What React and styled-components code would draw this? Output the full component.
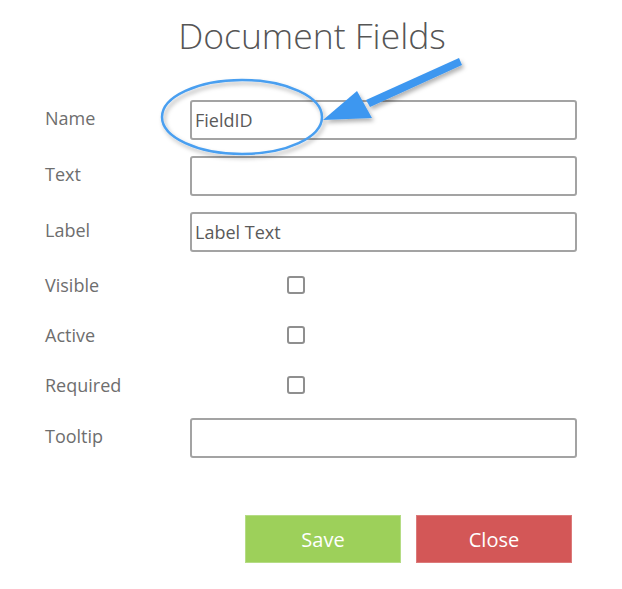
import styled, { createGlobalStyle } from 'styled-components';

const GlobalStyle = createGlobalStyle`
  body {
    margin: 0;
    background: #fff;
    font-family: "Open Sans", "Noto Sans", sans-serif;
  }
`;

const Page = styled.div`
  position: relative;
  width: 622px;
  height: 589px;
  overflow: hidden;
  background: #fff;
`;

const Title = styled.h1`
  margin: 0;
  padding-top: 11px;
  height: 100px;
  box-sizing: border-box;
  text-align: center;
  font-size: 35.5px;
  font-weight: 300;
  color: #555;
  padding-left: 2px;
`;

const Form = styled.div`
  display: flex;
  flex-direction: column;
  gap: 16px;
  padding-left: 45px;
`;

const Row = styled.div`
  display: grid;
  grid-template-columns: 145px 387px;
  align-items: center;
  height: ${(p) => (p.$check ? '34px' : '40px')};
`;

const Label = styled.span`
  font-size: 18px;
  color: #6e6e6e;
  padding-bottom: ${(p) => (p.$top ? '5px' : '0')};
`;

const TextInput = styled.div`
  box-sizing: border-box;
  height: 40px;
  border: 2px solid #a3a3a3;
  border-radius: 3px;
  padding-left: 3px;
  display: flex;
  align-items: center;
  font-size: 18px;
  color: #5a5a5a;
`;

const CheckBox = styled.span`
  box-sizing: border-box;
  width: 18px;
  height: 18px;
  margin-left: 97px;
  border: 2px solid #8f8f8f;
  border-radius: 3px;
`;

const Buttons = styled.div`
  display: flex;
  gap: 15px;
  padding-left: 245px;
  margin-top: 57px;
`;

const Button = styled.div`
  width: 156px;
  height: 48px;
  display: flex;
  align-items: center;
  justify-content: center;
  font-size: 20px;
  color: #fff;
  background: ${(p) => p.$color};
  border: 1px solid ${(p) => p.$edge};
  box-sizing: border-box;
`;

const Annotation = styled.svg`
  position: absolute;
  left: 0;
  top: 0;
  pointer-events: none;
`;

export default function App() {
  return (
    <Page>
      <GlobalStyle />
      <Title>Document Fields</Title>
      <Form>
        <Row>
          <Label $top>Name</Label>
          <TextInput>FieldID</TextInput>
        </Row>
        <Row>
          <Label $top>Text</Label>
          <TextInput />
        </Row>
        <Row>
          <Label $top>Label</Label>
          <TextInput>Label Text</TextInput>
        </Row>
        <Row $check>
          <Label>Visible</Label>
          <CheckBox />
        </Row>
        <Row $check>
          <Label>Active</Label>
          <CheckBox />
        </Row>
        <Row $check>
          <Label>Required</Label>
          <CheckBox />
        </Row>
        <Row>
          <Label $top>Tooltip</Label>
          <TextInput />
        </Row>
      </Form>
      <Buttons>
        <Button $color="#9dd05a" $edge="#b5dc85">Save</Button>
        <Button $color="#d35757" $edge="#dc7a7a">Close</Button>
      </Buttons>
      <Annotation width="622" height="589" viewBox="0 0 622 589">
        <defs>
          <filter id="sh" x="-20%" y="-20%" width="140%" height="140%">
            <feDropShadow dx="2" dy="3" stdDeviation="2" floodColor="#000" floodOpacity="0.3" />
          </filter>
        </defs>
        <ellipse cx="242" cy="117" rx="80" ry="37" fill="none" stroke="#4a9ff0" strokeWidth="2.5" filter="url(#sh)" />
        <g filter="url(#sh)" fill="#3d97f0">
          <path d="M459 58 L462 65 L370 107 L366 100 Z" />
          <path d="M323 120 L357 91 L372 118 Z" />
        </g>
      </Annotation>
    </Page>
  );
}
